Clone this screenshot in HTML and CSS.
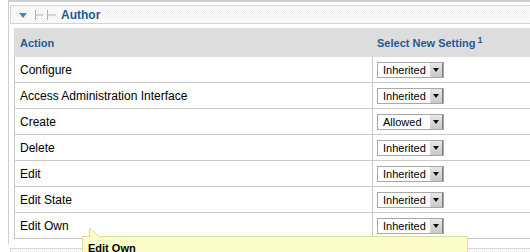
FILE: index.html
```html
<!DOCTYPE html>
<html>
<head>
<meta charset="utf-8">
<link rel="stylesheet" href="styles.css">
</head>
<body>
<div class="page">
  <div class="panel">
    <div class="head">
      <span class="tri"></span>
      <svg class="tree" width="22" height="10" viewBox="0 0 22 10"><path d="M0.5 0V10M0.5 5H8M12.5 0V10M12.5 5H21" stroke="#b0b0b0" stroke-width="1" fill="none"/></svg>
      <span class="title">Author</span>
    </div>
    <div class="grid">
      <div class="row hdr">
        <div class="c1">Action</div>
        <div class="c2">Select New Setting <sup>1</sup></div>
      </div>
      <div class="row"><div class="c1">Configure</div><div class="c2"><div class="sel"><span class="val">Inherited</span><span class="btn"></span></div></div></div>
      <div class="row"><div class="c1">Access Administration Interface</div><div class="c2"><div class="sel"><span class="val">Inherited</span><span class="btn"></span></div></div></div>
      <div class="row"><div class="c1">Create</div><div class="c2"><div class="sel"><span class="val">Allowed</span><span class="btn"></span></div></div></div>
      <div class="row"><div class="c1">Delete</div><div class="c2"><div class="sel"><span class="val">Inherited</span><span class="btn"></span></div></div></div>
      <div class="row"><div class="c1">Edit</div><div class="c2"><div class="sel"><span class="val">Inherited</span><span class="btn"></span></div></div></div>
      <div class="row"><div class="c1">Edit State</div><div class="c2"><div class="sel"><span class="val">Inherited</span><span class="btn"></span></div></div></div>
      <div class="row"><div class="c1">Edit Own</div><div class="c2"><div class="sel"><span class="val">Inherited</span><span class="btn"></span></div></div></div>
    </div>
  </div>
  <div class="next-head"></div>
  <div class="tip">
    <svg class="tail" width="12" height="9" viewBox="0 0 12 9"><path d="M0.5 9V0.5L11 9" fill="#fdfdcb" stroke="#dcdca0" stroke-width="1"/></svg>
    <div class="tip-title">Edit Own</div>
  </div>
</div>
</body>
</html>
```
FILE: styles.css
```css
html, body {
  margin: 0;
  padding: 0;
  overflow: hidden;
  background: #fff;
  font-family: "Liberation Sans", Arial, sans-serif;
}
.page {
  width: 600px;
  position: relative;
  height: 252px;
}
.panel {
  margin-left: 8px;
  border-left: 1px solid #cfcfcf;
  border-top: 2px solid #cfcfcf;
  padding: 3px 0 5px 1px;
}
.head {
  height: 17px;
  border: 1px solid #d4d4d4;
  background: repeating-conic-gradient(#f1f1f1 0 25%, #fff 0 50%) 0 0 / 2px 2px;
  display: flex;
  align-items: center;
  padding-left: 8px;
}
.tri {
  width: 0;
  height: 0;
  border-left: 4px solid transparent;
  border-right: 4px solid transparent;
  border-top: 5px solid #3b8fcd;
  margin-top: 1px;
}
.tree {
  margin-left: 8px;
}
.title {
  margin-left: 4px;
  font-size: 12px;
  font-weight: bold;
  color: #1b5a91;
}
.grid {
  margin: 4px 0 0 4px;
}
.row {
  display: grid;
  grid-template-columns: 358px 1fr;
  height: 26px;
}
.row .c1, .row .c2 {
  display: flex;
  align-items: center;
  border-bottom: 1px solid #cbcbcb;
  font-size: 12px;
  color: #000;
}
.row .c1 {
  border-left: 1px solid #cbcbcb;
  padding-left: 5px;
}
.row .c2 {
  border-left: 1px solid #cbcbcb;
  padding-left: 4px;
}
.row.hdr {
  height: 29px;
  background: #dddddd;
}
.row.hdr .c1, .row.hdr .c2 {
  border: none;
  font-size: 11px;
  font-weight: bold;
  color: #1d5c95;
}
.row.hdr .c1 {
  padding-left: 6px;
}
.row.hdr .c2 {
  padding-left: 5px;
}
.row.hdr sup {
  font-size: 9px;
  margin-left: 2px;
  position: relative;
  top: -3px;
  vertical-align: baseline;
}
.sel {
  width: 65px;
  height: 14px;
  border: 1px solid #a8a8a8;
  background: #fff;
  display: flex;
  align-items: center;
  justify-content: space-between;
  margin-top: 1px;
}
.val {
  font-size: 11px;
  padding-left: 5px;
  color: #000;
}
.btn {
  width: 11px;
  height: 14px;
  background: linear-gradient(#e8e8e8, #c8c8c8);
  border-left: 1px solid #d8d8d8;
  border-right: 1px solid #7c7c7c;
  position: relative;
}
.btn::after {
  content: "";
  position: absolute;
  left: 2px;
  top: 5px;
  border-left: 3.5px solid transparent;
  border-right: 3.5px solid transparent;
  border-top: 4px solid #111;
}
.next-head {
  margin: 4px 0 0 10px;
  height: 20px;
  border-top: 1px solid #d8d8d8;
  border-left: 1px solid #d8d8d8;
  background: repeating-conic-gradient(#f1f1f1 0 25%, #fff 0 50%) 0 0 / 2px 2px;
}
.tip {
  position: absolute;
  left: 82px;
  top: 236px;
  width: 384px;
  height: 40px;
  background: #fdfdcb;
  border: 1px solid #dcdca0;
}
.tail {
  position: absolute;
  left: 6px;
  top: -9px;
}
.tip-title {
  font-size: 11px;
  font-weight: bold;
  color: #000;
  padding: 5px 0 0 5px;
}
```
